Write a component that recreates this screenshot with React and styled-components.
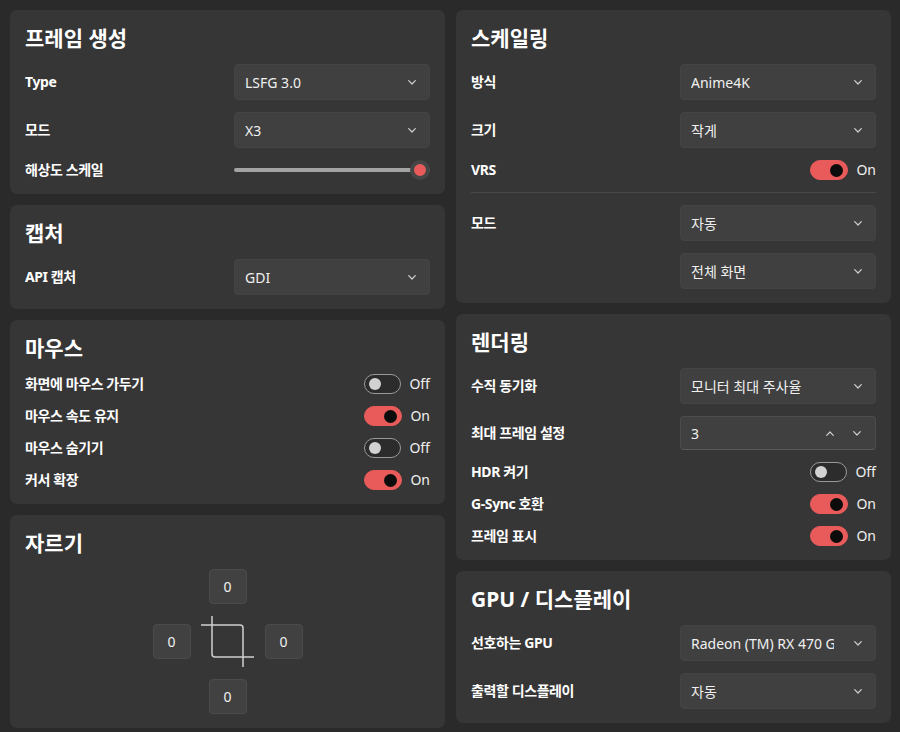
import React from "react";
import styled, { createGlobalStyle } from "styled-components";

const GlobalStyle = createGlobalStyle`
  html, body {
    margin: 0;
    padding: 0;
    background: #2a2a2a;
  }
  body {
    font-family: "Noto Sans", "Noto Sans CJK KR", sans-serif;
    color: #ffffff;
  }
`;

const Page = styled.div`
  display: grid;
  grid-template-columns: 435px 435px;
  column-gap: 11px;
  align-items: start;
  padding: 10px 9px 0 10px;
  height: 732px;
  box-sizing: border-box;
  overflow: hidden;
`;

const Column = styled.div`
  display: flex;
  flex-direction: column;
  gap: 11px;
`;

const Card = styled.section`
  background: #363636;
  border-radius: 7px;
  padding: 14px 15px 14px 15px;
`;

const Title = styled.h2`
  margin: 0 0 12px;
  font-size: 21px;
  line-height: 28px;
  font-weight: 700;
  color: #ffffff;
`;

const Body = styled.div`
  display: flex;
  flex-direction: column;
  gap: 12px;
`;

const Row = styled.div`
  display: grid;
  grid-template-columns: 1fr 196px;
  align-items: ${props => (props.top ? "start" : "center")};
  min-height: 20px;
`;

const Label = styled.div`
  font-size: 14px;
  font-weight: 700;
  letter-spacing: -0.4px;
  color: #ffffff;
  line-height: ${props => (props.tall ? "36px" : "20px")};
  white-space: nowrap;
`;

const Stack = styled.div`
  display: flex;
  flex-direction: column;
  gap: 12px;
`;

const SelectBox = styled.div`
  height: 36px;
  box-sizing: border-box;
  background: #404040;
  border: 1px solid #444444;
  border-radius: 4px;
  display: flex;
  align-items: center;
  padding: 0 13px 0 10px;
  gap: 20px;
  font-size: 14px;
  color: #f0f0f0;
`;

const Value = styled.span`
  flex: 1;
  overflow: hidden;
  white-space: nowrap;
`;

const NumberBoxWrap = styled(SelectBox)`
  height: 34px;
  border: 1px solid #4c4c4c;
  border-bottom-color: #5a5a5a;
  padding-right: 14px;
  gap: 19px;
`;

const Chevron = ({ up }) => (
  <svg width="8" height="5" viewBox="0 0 8 5" fill="none">
    <path
      d={up ? "M0.7 4.3 L4 1 L7.3 4.3" : "M0.7 0.7 L4 4 L7.3 0.7"}
      stroke="#d0d0d0"
      strokeWidth="1.2"
      strokeLinecap="round"
      strokeLinejoin="round"
    />
  </svg>
);

const Select = ({ value }) => (
  <SelectBox>
    <Value>{value}</Value>
    <Chevron />
  </SelectBox>
);

const NumberBox = ({ value }) => (
  <NumberBoxWrap>
    <Value>{value}</Value>
    <Chevron up />
    <Chevron />
  </NumberBoxWrap>
);

const ToggleWrap = styled.div`
  justify-self: end;
  width: 66px;
  display: flex;
  align-items: center;
  gap: 8px;
`;

const Track = styled.div`
  width: 40px;
  height: 20px;
  box-sizing: border-box;
  border-radius: 10px;
  display: flex;
  align-items: center;
  padding: 0 4px;
  justify-content: ${props => (props.on ? "flex-end" : "flex-start")};
  background: ${props => (props.on ? "#e95b5b" : "#2c2c2c")};
  border: 1px solid ${props => (props.on ? "#e95b5b" : "#9a9a9a")};
`;

const Knob = styled.div`
  width: ${props => (props.on ? "13px" : "12px")};
  height: ${props => (props.on ? "13px" : "12px")};
  border-radius: 50%;
  background: ${props => (props.on ? "#0c0c0c" : "#d2d2d2")};
`;

const ToggleText = styled.span`
  font-size: 14px;
  color: #f0f0f0;
  line-height: 20px;
`;

const Toggle = ({ on }) => (
  <ToggleWrap>
    <Track on={on}>
      <Knob on={on} />
    </Track>
    <ToggleText>{on ? "On" : "Off"}</ToggleText>
  </ToggleWrap>
);

const SliderBox = styled.div`
  position: relative;
  height: 20px;
  display: flex;
  align-items: center;
`;

const SliderTrack = styled.div`
  width: 100%;
  height: 4px;
  border-radius: 2px;
  background: #a3a3a3;
`;

const SliderThumb = styled.div`
  position: absolute;
  right: 0;
  top: 0;
  width: 20px;
  height: 20px;
  box-sizing: border-box;
  border-radius: 50%;
  background: #e95b5b;
  border: 4px solid #454545;
`;

const Divider = styled.div`
  height: 1px;
  background: #484848;
`;

const CropGrid = styled.div`
  display: grid;
  grid-template-columns: repeat(3, 38px);
  grid-template-rows: repeat(3, 35px);
  column-gap: 18px;
  row-gap: 20px;
  justify-content: center;
  align-items: center;
  justify-items: center;
`;

const CropInput = styled.div`
  grid-column: ${props => props.col};
  grid-row: ${props => props.row};
  width: 38px;
  height: 35px;
  box-sizing: border-box;
  background: #414141;
  border: 1px solid #4b4b4b;
  border-radius: 4px;
  display: flex;
  align-items: center;
  justify-content: center;
  font-size: 14px;
  color: #f0f0f0;
`;

const CropIconCell = styled.div`
  grid-column: 2;
  grid-row: 2;
  display: flex;
  align-items: center;
  justify-content: center;
`;

const CropIcon = () => (
  <svg width="54" height="52" viewBox="0 0 54 52" fill="none">
    <path d="M11 0 V38 a3 3 0 0 0 3 3 H53" stroke="#cfcfcf" strokeWidth="1.5" />
    <path d="M0 9 H39 a3 3 0 0 1 3 3 V51" stroke="#cfcfcf" strokeWidth="1.5" />
  </svg>
);

const SelectRow = ({ label, value }) => (
  <Row>
    <Label>{label}</Label>
    <Select value={value} />
  </Row>
);

const ToggleRow = ({ label, on }) => (
  <Row>
    <Label>{label}</Label>
    <Toggle on={on} />
  </Row>
);

export default function App() {
  return (
    <>
      <GlobalStyle />
      <Page>
        <Column>
          <Card>
            <Title>프레임 생성</Title>
            <Body>
              <SelectRow label="Type" value="LSFG 3.0" />
              <SelectRow label="모드" value="X3" />
              <Row>
                <Label>해상도 스케일</Label>
                <SliderBox>
                  <SliderTrack />
                  <SliderThumb />
                </SliderBox>
              </Row>
            </Body>
          </Card>

          <Card>
            <Title>캡처</Title>
            <Body>
              <SelectRow label="API 캡처" value="GDI" />
            </Body>
          </Card>

          <Card>
            <Title>마우스</Title>
            <Body>
              <ToggleRow label="화면에 마우스 가두기" on={false} />
              <ToggleRow label="마우스 속도 유지" on />
              <ToggleRow label="마우스 숨기기" on={false} />
              <ToggleRow label="커서 확장" on />
            </Body>
          </Card>

          <Card>
            <Title>자르기</Title>
            <CropGrid>
              <CropInput col={2} row={1}>0</CropInput>
              <CropInput col={1} row={2}>0</CropInput>
              <CropIconCell>
                <CropIcon />
              </CropIconCell>
              <CropInput col={3} row={2}>0</CropInput>
              <CropInput col={2} row={3}>0</CropInput>
            </CropGrid>
          </Card>
        </Column>

        <Column>
          <Card>
            <Title>스케일링</Title>
            <Body>
              <SelectRow label="방식" value="Anime4K" />
              <SelectRow label="크기" value="작게" />
              <ToggleRow label="VRS" on />
              <Divider />
              <Row top>
                <Label tall>모드</Label>
                <Stack>
                  <Select value="자동" />
                  <Select value="전체 화면" />
                </Stack>
              </Row>
            </Body>
          </Card>

          <Card>
            <Title>렌더링</Title>
            <Body>
              <SelectRow label="수직 동기화" value="모니터 최대 주사율" />
              <Row>
                <Label>최대 프레임 설정</Label>
                <NumberBox value="3" />
              </Row>
              <ToggleRow label="HDR 켜기" on={false} />
              <ToggleRow label="G-Sync 호환" on />
              <ToggleRow label="프레임 표시" on />
            </Body>
          </Card>

          <Card>
            <Title>GPU / 디스플레이</Title>
            <Body>
              <SelectRow label="선호하는 GPU" value="Radeon (TM) RX 470 Graphics" />
              <SelectRow label="출력할 디스플레이" value="자동" />
            </Body>
          </Card>
        </Column>
      </Page>
    </>
  );
}
